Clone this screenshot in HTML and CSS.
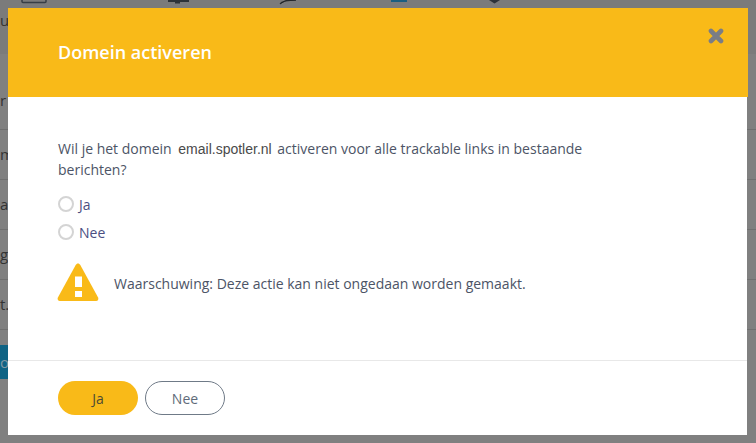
FILE: index.html
```html
<!DOCTYPE html>
<html lang="nl">
<head>
  <meta charset="UTF-8" />
  <meta name="viewport" content="width=device-width, initial-scale=1" />
  <title>Domein activeren</title>
  <link rel="stylesheet" href="styles.css">
</head>
<body>

<!-- Pagina achter de modal (gedimd) -->
<div class="page">
  <div class="topbar">
    <svg class="top-icons" width="756" height="6" viewBox="0 0 756 6">
      <path d="M22 -3V1.500Q22 2.500 23 2.500H45Q46 2.500 46 1.500V-3" fill="none" stroke="#363d45" stroke-width="1.500"/>
      <path d="M168 0H189V2H180V3.500H175V2H168Z" fill="#2c3238"/>
      <path d="M280 4L285 1L296 0H288L281 2.500Z" fill="#23272b" stroke="#23272b" stroke-width="1"/>
      <rect x="391" y="0" width="16" height="2" fill="#1a5e80"/>
      <path d="M489 0H500L494.500 3.500Z" fill="#2c3238"/>
    </svg>
    <span class="top-text">ur</span>
  </div>
  <div class="heading">r</div>
  <div class="row">m</div>
  <div class="row">a</div>
  <div class="row">gi</div>
  <div class="row">t.l</div>
  <div class="page-btn">or</div>
</div>

<!-- Modal -->
<div class="modal">
  <div class="modal-header">
    <h2 class="modal-title">Domein activeren</h2>
    <span class="modal-close" title="Sluiten">
      <svg width="16" height="16" viewBox="0 0 16 16"><path d="M3 3L13 13M13 3L3 13" stroke="#7a7d85" stroke-width="4.600" stroke-linecap="round" fill="none"/></svg>
    </span>
  </div>
  <div class="modal-body">
    <p class="question">Wil je het domein <span class="domain">email.spotler.nl</span> activeren voor alle trackable links in bestaande berichten?</p>
    <label class="radio-row"><span class="radio"></span>Ja</label>
    <label class="radio-row"><span class="radio"></span>Nee</label>
    <div class="warning">
      <svg width="42" height="40" viewBox="0 0 42 40"><path d="M21 1.500c1 0 1.800.6 2.300 1.500l17.800 32.500c.8 1.600 0 3.500-2 3.500H2.900c-2 0-2.800-1.900-2-3.500L18.700 3c.5-.9 1.300-1.500 2.300-1.500z" fill="#f9ba18"/><rect x="18" y="14.500" width="7" height="10.500" fill="#fff"/><rect x="18" y="29" width="7" height="6" fill="#fff"/></svg>
      <span class="warning-text">Waarschuwing: Deze actie kan niet ongedaan worden gemaakt.</span>
    </div>
  </div>
  <div class="modal-footer">
    <a href="#" class="btn btn-yes">Ja</a>
    <a href="#" class="btn btn-no">Nee</a>
  </div>
</div>

</body>
</html>
```

FILE: styles.css
```css
* {
  box-sizing: border-box;
}
html, body {
  height: 100%;
}
body {
  margin: 0;
  background: #808080;
  font-family: "Open Sans", sans-serif;
  font-size: 14px;
  color: #4c5466;
  overflow: hidden;
}

/* gedimde pagina */
.page {
  height: 100%;
  color: #333;
  font-size: 15px;
}
.topbar {
  height: 54px;
  background: #7b7b7b;
}
.top-icons {
  display: block;
}
.top-text {
  display: block;
  margin-top: 4px;
}
.heading {
  height: 76px;
  padding-top: 36px;
  border-bottom: 1px solid #6f6f6f;
}
.row {
  height: 50px;
  padding-top: 14px;
  border-bottom: 1px solid #707070;
}
.page-btn {
  width: 120px;
  height: 34px;
  margin-top: 15px;
  background: #0f6384;
  color: #7f98a4;
  line-height: 34px;
}

/* modal */
.modal {
  position: absolute;
  left: 8px;
  top: 8px;
  width: 740px;
  height: 427px;
  display: flex;
  flex-direction: column;
}
.modal-header {
  height: 89px;
  background: #f9ba18;
  display: flex;
  justify-content: space-between;
  padding: 0 24px 0 50px;
  align-items: center;
}
.modal-title {
  margin: 0 0 2px;
  font-size: 18px;
  font-weight: 600;
  color: white;
}
.modal-close {
  align-self: flex-start;
  margin-top: 20px;
  height: 16px;
}

.modal-body {
  flex: 1;
  margin-right: 1px;
  padding: 41px 50px 0;
  background: white;
  border-bottom: 1px solid #e8e8e8;
}
.question {
  margin: 0 0 10px;
  width: 540px;
  line-height: 21px;
}
.domain {
  font-family: "Liberation Sans", sans-serif;
  line-height: 1;
  color: #4a4a4a;
  margin: 0 2px 0 3px;
}
.radio-row {
  display: flex;
  align-items: center;
  height: 28px;
  gap: 5px;
  color: #4b4f82;
}
.radio {
  width: 16px;
  height: 16px;
  border: 2px solid #d4d4d4;
  border-radius: 50%;
}
.warning {
  display: flex;
  align-items: center;
  gap: 15px;
  margin: 16px 0 0 -1px;
}
.warning-text {
  padding-top: 2px;
}

.modal-footer {
  height: 74px;
  margin-right: 1px;
  padding: 20px 50px 0;
  background: white;
  display: flex;
  gap: 7px;
}
.btn {
  width: 80px;
  height: 34px;
  border-radius: 17px;
  display: flex;
  align-items: center;
  justify-content: center;
  text-decoration: none;
}
.btn-yes {
  background: #f9ba18;
  color: #4c4a35;
}
.btn-no {
  border: 1px solid #6f7a87;
  color: #5f6b7a;
}
```
